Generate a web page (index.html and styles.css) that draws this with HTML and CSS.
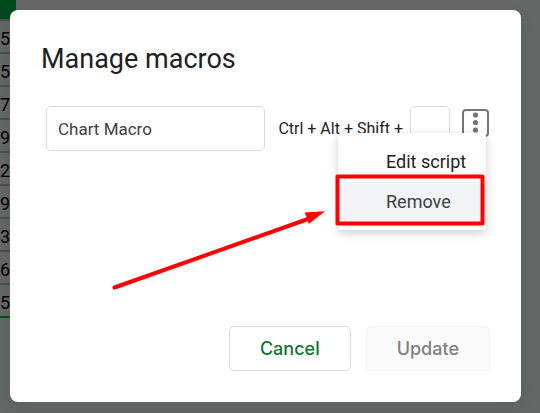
FILE: index.html
```html
<!DOCTYPE html>
<html lang="en">
<head>
<meta charset="utf-8">
<title>Manage macros</title>
<link rel="stylesheet" href="styles.css">
</head>
<body>
<table class="sheet" aria-hidden="true">
  <thead><tr><th></th></tr></thead>
  <tbody>
    <tr><td>5</td></tr>
    <tr><td>5</td></tr>
    <tr><td>7</td></tr>
    <tr><td>9</td></tr>
    <tr><td>2</td></tr>
    <tr><td>9</td></tr>
    <tr><td>3</td></tr>
    <tr><td>6</td></tr>
    <tr><td>5</td></tr>
  </tbody>
</table>
<main class="dialog" role="dialog" aria-labelledby="title">
  <h1 class="title" id="title">Manage macros</h1>
  <div class="macro">
    <input class="field name" type="text" value="Chart Macro" aria-label="Macro name">
    <label class="shortcut" for="key">Ctrl + Alt + Shift +</label>
    <input class="field key" id="key" type="text" maxlength="1">
    <div class="more">
      <button class="more-button" type="button" aria-label="More options">
        <svg width="23" height="24" viewBox="0 0 23 24" fill="#757575">
          <circle cx="11.500" cy="4" r="2.6"/><circle cx="11.500" cy="11.500" r="2.6"/><circle cx="11.500" cy="19" r="2.6"/>
        </svg>
      </button>
      <div class="menu" role="menu">
        <button class="item" type="button" role="menuitem">Edit script</button>
        <button class="item active" type="button" role="menuitem">Remove</button>
        <svg class="marks" width="148" height="97" viewBox="0 0 148 97">
          <rect x="-0.500" y="43.500" width="145" height="47" fill="none" stroke="#f00" stroke-width="4" stroke-linejoin="round"/>
          <path d="M-223.500 154.500L-30 86" stroke="#f00" stroke-width="4" stroke-linecap="round"/>
          <path d="M-13 78.300L-33.500 79.500L-31 85L-29.300 91Z" fill="#f00"/>
        </svg>
      </div>
    </div>
  </div>
  <div class="actions">
    <button class="button cancel" type="button">Cancel</button>
    <button class="button update" type="button" disabled>Update</button>
  </div>
</main>
</body>
</html>
```
FILE: styles.css
```css
* { box-sizing: border-box; }

body {
  margin: 0;
  padding: 10px 19px 11px 10px;
  background: #656666;
  font: 18px/24px Roboto, sans-serif;
  color: #202124;
}

button, input { font: inherit; }

.sheet {
  position: absolute;
  top: 0;
  left: 0;
  border-collapse: collapse;
  color: #000;
  border-bottom: 2px solid #064d1c;
}

.sheet th {
  height: 20px;
  padding: 0;
  background: #00481c;
}

.sheet td {
  width: 16px;
  height: 33px;
  padding: 4px 5px 0 0;
  border-top: 2px solid #4d4d4d;
  font-size: 18px;
}

.dialog {
  position: relative;
  padding: 31px;
  border-radius: 8px;
  background: #fff;
  box-shadow: 0 4px 16px rgba(60, 64, 67, .15);
}

.title {
  margin: 0;
  font: 400 27px/36px Roboto, sans-serif;
}

.macro {
  display: flex;
  align-items: center;
  margin: 29px 1px 0 5px;
}

.field {
  height: 45px;
  border: 1px solid #dadce0;
  border-radius: 5px;
  background: #fff;
  color: #3c4043;
}

.name {
  flex: 1;
  min-width: 0;
  padding: 0 11px;
  font-size: 17px;
}

.shortcut {
  margin: 0 7px 0 13px;
  font-size: 16px;
  white-space: nowrap;
}

.key {
  width: 40px;
  padding: 0 8px;
}

.more {
  position: relative;
  align-self: flex-start;
  margin: 3px 0 0 12px;
}

.more-button {
  display: grid;
  place-items: center;
  width: 27px;
  height: 28px;
  padding: 0;
  border: 2px solid #757575;
  border-radius: 4px;
  background: #fff;
}

.menu {
  position: absolute;
  top: 24px;
  right: 3px;
  width: 148px;
  padding: 9px 0 8px;
  border-radius: 4px;
  background: #fff;
  box-shadow: 0 3px 10px rgba(0, 0, 0, .2);
}

.item {
  display: block;
  width: 100%;
  height: 40px;
  padding: 0 0 0 48px;
  border: 0;
  background: none;
  color: #202124;
  text-align: left;
}

.active {
  background: #f1f3f4;
  color: #3c4043;
}

.marks {
  position: absolute;
  top: 0;
  left: 0;
  overflow: visible;
  pointer-events: none;
}

.actions {
  display: flex;
  justify-content: flex-end;
  gap: 15px;
  margin-top: 175px;
}

.button {
  height: 45px;
  padding: 0 30px;
  border: 1px solid #dadce0;
  border-radius: 5px;
  background: #fff;
  font: 500 18px/24px Inter, sans-serif;
}

.cancel { color: #137333; }

.update {
  border-color: #f5f5f5;
  background: #fafafa;
  color: #808080;
}
```
